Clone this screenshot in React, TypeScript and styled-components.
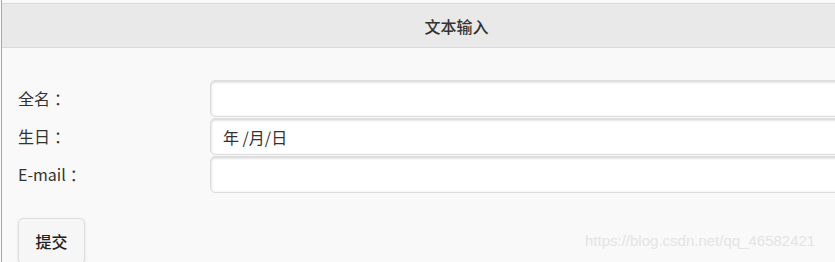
import React from "react";
import styled, { createGlobalStyle } from "styled-components";

const Global = createGlobalStyle`
  html, body { margin: 0; padding: 0; background: #f9f9f9; overflow: hidden; }
  body { font-family: "Noto Sans CJK SC", "Noto Sans", sans-serif; color: #333; }
`;

const Page = styled.div`
  position: relative;
  width: 910px;
  height: 262px;
  margin-left: 1px;
  border-left: 1px solid #a9a9a9;
  background: #f9f9f9;
  padding-top: 3px;
  box-sizing: border-box;
`;

const Header = styled.header`
  height: 45px;
  box-sizing: border-box;
  background: #e9e9e9;
  border-top: 1px solid #dadada;
  border-bottom: 1px solid #dadada;
  display: flex;
  align-items: center;
  justify-content: center;
`;

const Title = styled.h1`
  margin: 0;
  font-size: 16px;
  font-weight: 500;
  color: #333;
`;

const Content = styled.form`
  padding: 32px 0 0 16px;
`;

const Row = styled.div`
  display: grid;
  grid-template-columns: 192px 1fr;
  align-items: center;
  margin-bottom: 1px;
`;

const Label = styled.label`
  font-size: 16px;
  color: #333;
  line-height: 20px;
  margin-top: -2px;
`;

const Colon = styled.span`
  margin-left: 4px;
`;

const Field = styled.input`
  height: 37px;
  box-sizing: border-box;
  width: 100%;
  border: 1px solid #dddddd;
  border-radius: 5px;
  background: #fff;
  box-shadow: inset 0 1px 3px rgba(0, 0, 0, 0.2);
  padding: 0 12px;
  font-family: "Noto Sans CJK SC", "Noto Sans", sans-serif;
  font-size: 16px;
  color: #333;
  outline: none;
`;

const Button = styled.button`
  margin-top: 24px;
  width: 67px;
  height: 46px;
  box-sizing: border-box;
  background: #f6f6f6;
  border: 1px solid #dddddd;
  border-radius: 5px;
  box-shadow: 0 1px 3px rgba(0, 0, 0, 0.1);
  font-family: "Noto Sans CJK SC", "Noto Sans", sans-serif;
  font-size: 16px;
  font-weight: 500;
  color: #222;
  padding: 0;
`;

const Watermark = styled.span`
  position: absolute;
  left: 583px;
  top: 232px;
  font-family: "Liberation Sans", Arial, sans-serif;
  font-size: 15px;
  color: #e4e4e4;
  white-space: nowrap;
`;

export default function App() {
  return (
    <>
      <Global />
      <Page>
        <Header>
          <Title>文本输入</Title>
        </Header>
        <Content onSubmit={(e) => e.preventDefault()}>
          <Row>
            <Label htmlFor="fullname">全名<Colon>：</Colon></Label>
            <Field id="fullname" type="text" />
          </Row>
          <Row>
            <Label htmlFor="bday">生日<Colon>：</Colon></Label>
            <Field id="bday" type="text" defaultValue="年 /月/日" readOnly />
          </Row>
          <Row>
            <Label htmlFor="email">E-mail<Colon>：</Colon></Label>
            <Field id="email" type="text" />
          </Row>
          <Button type="submit">提交</Button>
        </Content>
        <Watermark>https://blog.csdn.net/qq_46582421</Watermark>
      </Page>
    </>
  );
}
